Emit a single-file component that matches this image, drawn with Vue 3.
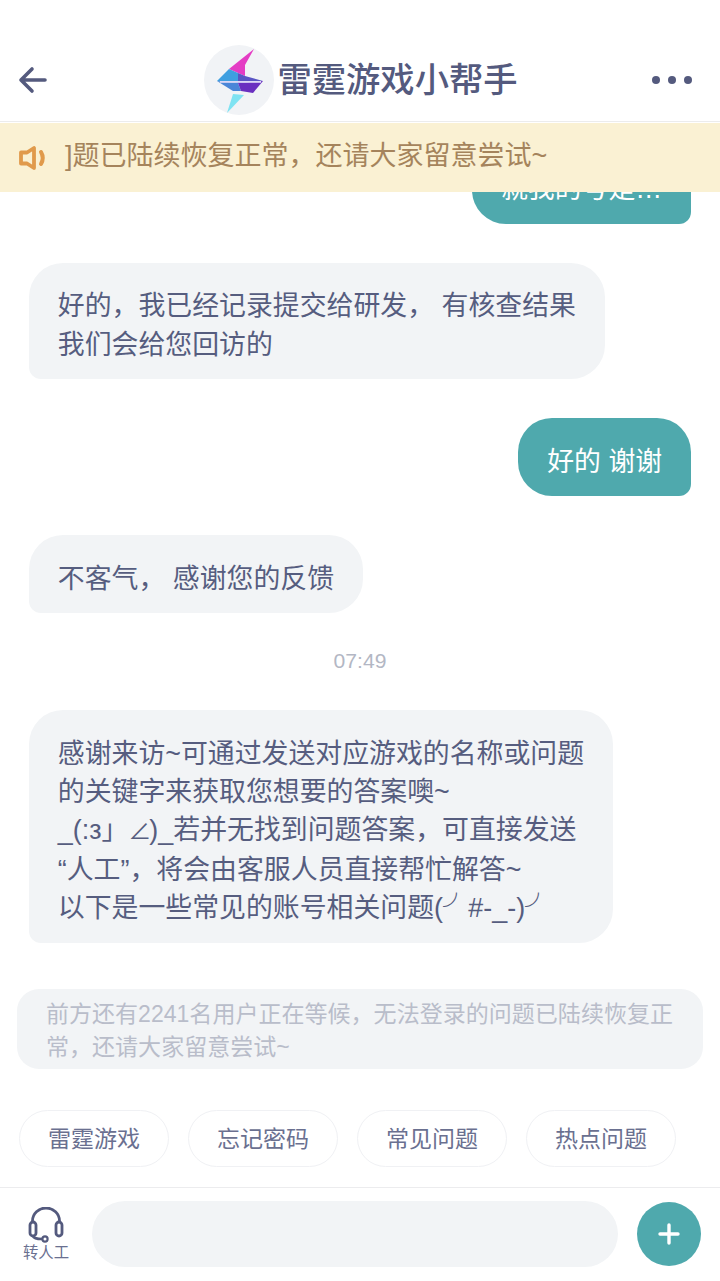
<template>
  <main class="app">
    <header class="header">
      <svg class="back" width="30" height="28" viewBox="0 0 30 28">
        <path d="M14 3 L3 14 L14 25 M3 14 H27" fill="none" stroke="#545a7e" stroke-width="3.6" stroke-linecap="round" stroke-linejoin="round" />
      </svg>
      <div class="title-wrap">
        <div class="logo">
          <svg width="70" height="70" viewBox="0 0 70 70">
            <polygon points="50,4 25,24 34,28 41,31 41,20" fill="#e43cc4" />
            <polygon points="25,24 13,36 34,38 34,28" fill="#3f9fe0" />
            <polygon points="34,28 41,31 59,36 34,38" fill="#5a55c4" />
            <polygon points="13,36 29,46 37,46 34,38" fill="#4b86d8" />
            <polygon points="34,38 59,36 49,48 37,46" fill="#6a2fc0" />
            <polygon points="29,49 40,50 23,68" fill="#7fe3f2" />
            <rect x="16" y="36" width="41" height="1.8" fill="#dcd8f6" />
          </svg>
        </div>
        <h1 class="title">雷霆游戏小帮手</h1>
      </div>
      <div class="more">
        <span class="dot"></span>
        <span class="dot"></span>
        <span class="dot"></span>
      </div>
    </header>

    <section class="notice">
      <svg class="horn" width="28" height="24" viewBox="0 0 28 24">
        <path d="M2 6.5 H8 L15 2 V22 L8 17.5 H2 Z" fill="none" stroke="#e09a4b" stroke-width="3.8" stroke-linejoin="round" />
        <path d="M22 6 Q25.5 12 22 18" fill="none" stroke="#e09a4b" stroke-width="4" stroke-linecap="round" />
      </svg>
      <p class="notice-text">]题已陆续恢复正常，还请大家留意尝试~</p>
    </section>

    <section class="chat">
      <div v-for="msg in messages" :key="msg.id" :class="['row', msg.type]">
        <span v-if="msg.type === 'time'" class="time">{{ msg.text }}</span>
        <div v-else class="bubble">
          <div v-for="line in msg.lines" :key="line">
            <template v-for="(part, i) in splitLine(line)" :key="i">
              <span v-if="part === '╯'" class="arc">{{ part }}</span>
              <span v-else-if="part === '∠'" class="angle">{{ part }}</span>
              <template v-else>{{ part }}</template>
            </template>
          </div>
        </div>
      </div>
    </section>

    <section class="queue">前方还有2241名用户正在等候，无法登录的问题已陆续恢复正常，还请大家留意尝试~</section>

    <nav class="chips">
      <button v-for="chip in chips" :key="chip" class="chip">{{ chip }}</button>
    </nav>

    <footer class="footer">
      <div class="agent">
        <svg width="38" height="36" viewBox="0 0 38 36">
          <path d="M5.5 15 V14 A13.5 13 0 0 1 32.5 14 V15" fill="none" stroke="#545a7e" stroke-width="2.8" />
          <rect x="3" y="15" width="6" height="14" rx="3" fill="none" stroke="#545a7e" stroke-width="2.8" />
          <rect x="29" y="15" width="6" height="14" rx="3" fill="none" stroke="#545a7e" stroke-width="2.8" />
          <path d="M6 29 Q7 32 15 32" fill="none" stroke="#545a7e" stroke-width="2.6" />
          <circle cx="18" cy="32" r="2.6" fill="#fff" stroke="#545a7e" stroke-width="2.2" />
        </svg>
        <span class="agent-label">转人工</span>
      </div>
      <div class="input"></div>
      <button class="plus">
        <svg width="22" height="22" viewBox="0 0 22 22">
          <path d="M11 2 V20 M2 11 H20" stroke="#fff" stroke-width="3.4" stroke-linecap="round" />
        </svg>
      </button>
    </footer>
  </main>
</template>

<script setup>
const messages = [
  { id: 1, type: 'me', lines: ['就我的号是…'] },
  { id: 2, type: 'them', lines: ['好的，我已经记录提交给研发， 有核查结果', '我们会给您回访的'] },
  { id: 3, type: 'me', lines: ['好的 谢谢'] },
  { id: 4, type: 'them', lines: ['不客气， 感谢您的反馈'] },
  { id: 5, type: 'time', text: '07:49' },
  {
    id: 6,
    type: 'them',
    lines: [
      '感谢来访~可通过发送对应游戏的名称或问题',
      '的关键字来获取您想要的答案噢~',
      '_(:з」∠)_若并无找到问题答案，可直接发送',
      '“人工”，将会由客服人员直接帮忙解答~',
      '以下是一些常见的账号相关问题(╯ #-_-)╯'
    ]
  }
]

const chips = ['雷霆游戏', '忘记密码', '常见问题', '热点问题']

// the kaomoji glyphs come out too wide in the CJK font, they get their own span
const splitLine = line => line.split(/(╯|∠)/).filter(Boolean)
</script>

<style>
body {
  margin: 0;
  background: #fff;
}
</style>

<style scoped>
.app {
  width: 720px;
  height: 1281px;
  display: flex;
  flex-direction: column;
  overflow: hidden;
  background: #fff;
  color: #565d7f;
  font-family: "Liberation Sans", "Noto Sans CJK SC", sans-serif;
}

/* Header */
.header {
  height: 122px;
  box-sizing: border-box;
  flex-shrink: 0;
  padding: 38px 28px 0 18px;
  display: flex;
  align-items: center;
  justify-content: space-between;
  border-bottom: 1px solid #ececec;
}

.title-wrap {
  display: flex;
  align-items: center;
  gap: 3px;
  margin-left: 22px;
}

.logo {
  width: 70px;
  height: 70px;
  border-radius: 50%;
  background: #f1f3f6;
}

.logo svg {
  display: block;
}

.title {
  margin: 0;
  font-size: 34.3px;
  font-weight: 500;
  line-height: 40px;
  color: #545a7e;
}

.more {
  display: flex;
  gap: 8px;
}

.dot {
  width: 8px;
  height: 8px;
  border-radius: 50%;
  background: #545a7e;
}

/* Notice */
.notice {
  height: 69px;
  flex-shrink: 0;
  margin-top: 1px;
  padding-left: 19px;
  display: flex;
  align-items: center;
  background: #faf1d3;
}

.horn {
  margin-right: 18px;
}

.notice-text {
  margin: 0 0 4px;
  font-size: 27px;
  line-height: 40px;
  color: #a5845c;
}

/* Chat */
.chat {
  flex: 1;
  min-height: 0;
  overflow: hidden;
  display: flex;
  flex-direction: column;
  justify-content: flex-end;
  gap: 39px;
  padding: 0 29px 46px;
}

.row {
  display: flex;
  flex-shrink: 0;
}

.row.me {
  justify-content: flex-end;
}

.row.time {
  justify-content: center;
  margin: -3px 0 -2px;
}

.time {
  font-size: 21.12px;
  line-height: 24px;
  color: #b3b7c4;
}

.bubble {
  padding: 24.3px 28.8px 15.3px;
  font-size: 26.88px;
  line-height: 38.4px;
  white-space: nowrap;
  border-radius: 34px;
}

.arc {
  letter-spacing: -9px;
}

.angle {
  font-size: 23px;
  letter-spacing: -2px;
}

.them .bubble {
  background: #f2f4f6;
  border-bottom-left-radius: 12px;
}

.me .bubble {
  background: #4fa9ad;
  color: #fff;
  border-bottom-right-radius: 12px;
}

/* Queue tip */
.queue {
  flex-shrink: 0;
  margin: 0 17px;
  height: 80px;
  box-sizing: border-box;
  padding: 9px 29px 0;
  border-radius: 22px;
  background: #f2f4f6;
  color: #b9bdca;
  font-size: 23.04px;
  line-height: 33px;
}

/* Chips */
.chips {
  flex-shrink: 0;
  display: flex;
  gap: 19px;
  padding: 41px 19px 20px;
}

.chip {
  width: 150px;
  height: 57px;
  padding: 0 0 4px;
  background: #fff;
  border: 1px solid #f0f1f4;
  border-radius: 29px;
  color: #6a7090;
  font-family: inherit;
  font-size: 23.04px;
}

/* Footer */
.footer {
  flex-shrink: 0;
  height: 94px;
  box-sizing: border-box;
  border-top: 1px solid #ececee;
  padding: 13px 19px 14px 0;
  display: flex;
  align-items: center;
}

.agent {
  width: 92px;
  display: flex;
  flex-direction: column;
  align-items: center;
}

.agent-label {
  margin-top: 1px;
  font-size: 15.36px;
  line-height: 18px;
  color: #6a7090;
}

.input {
  flex: 1;
  height: 66px;
  border-radius: 33px;
  background: #f2f4f6;
}

.plus {
  width: 64px;
  height: 64px;
  margin-left: 19px;
  padding: 0;
  border: none;
  border-radius: 50%;
  background: #4fa9ad;
  display: flex;
  align-items: center;
  justify-content: center;
}
</style>
